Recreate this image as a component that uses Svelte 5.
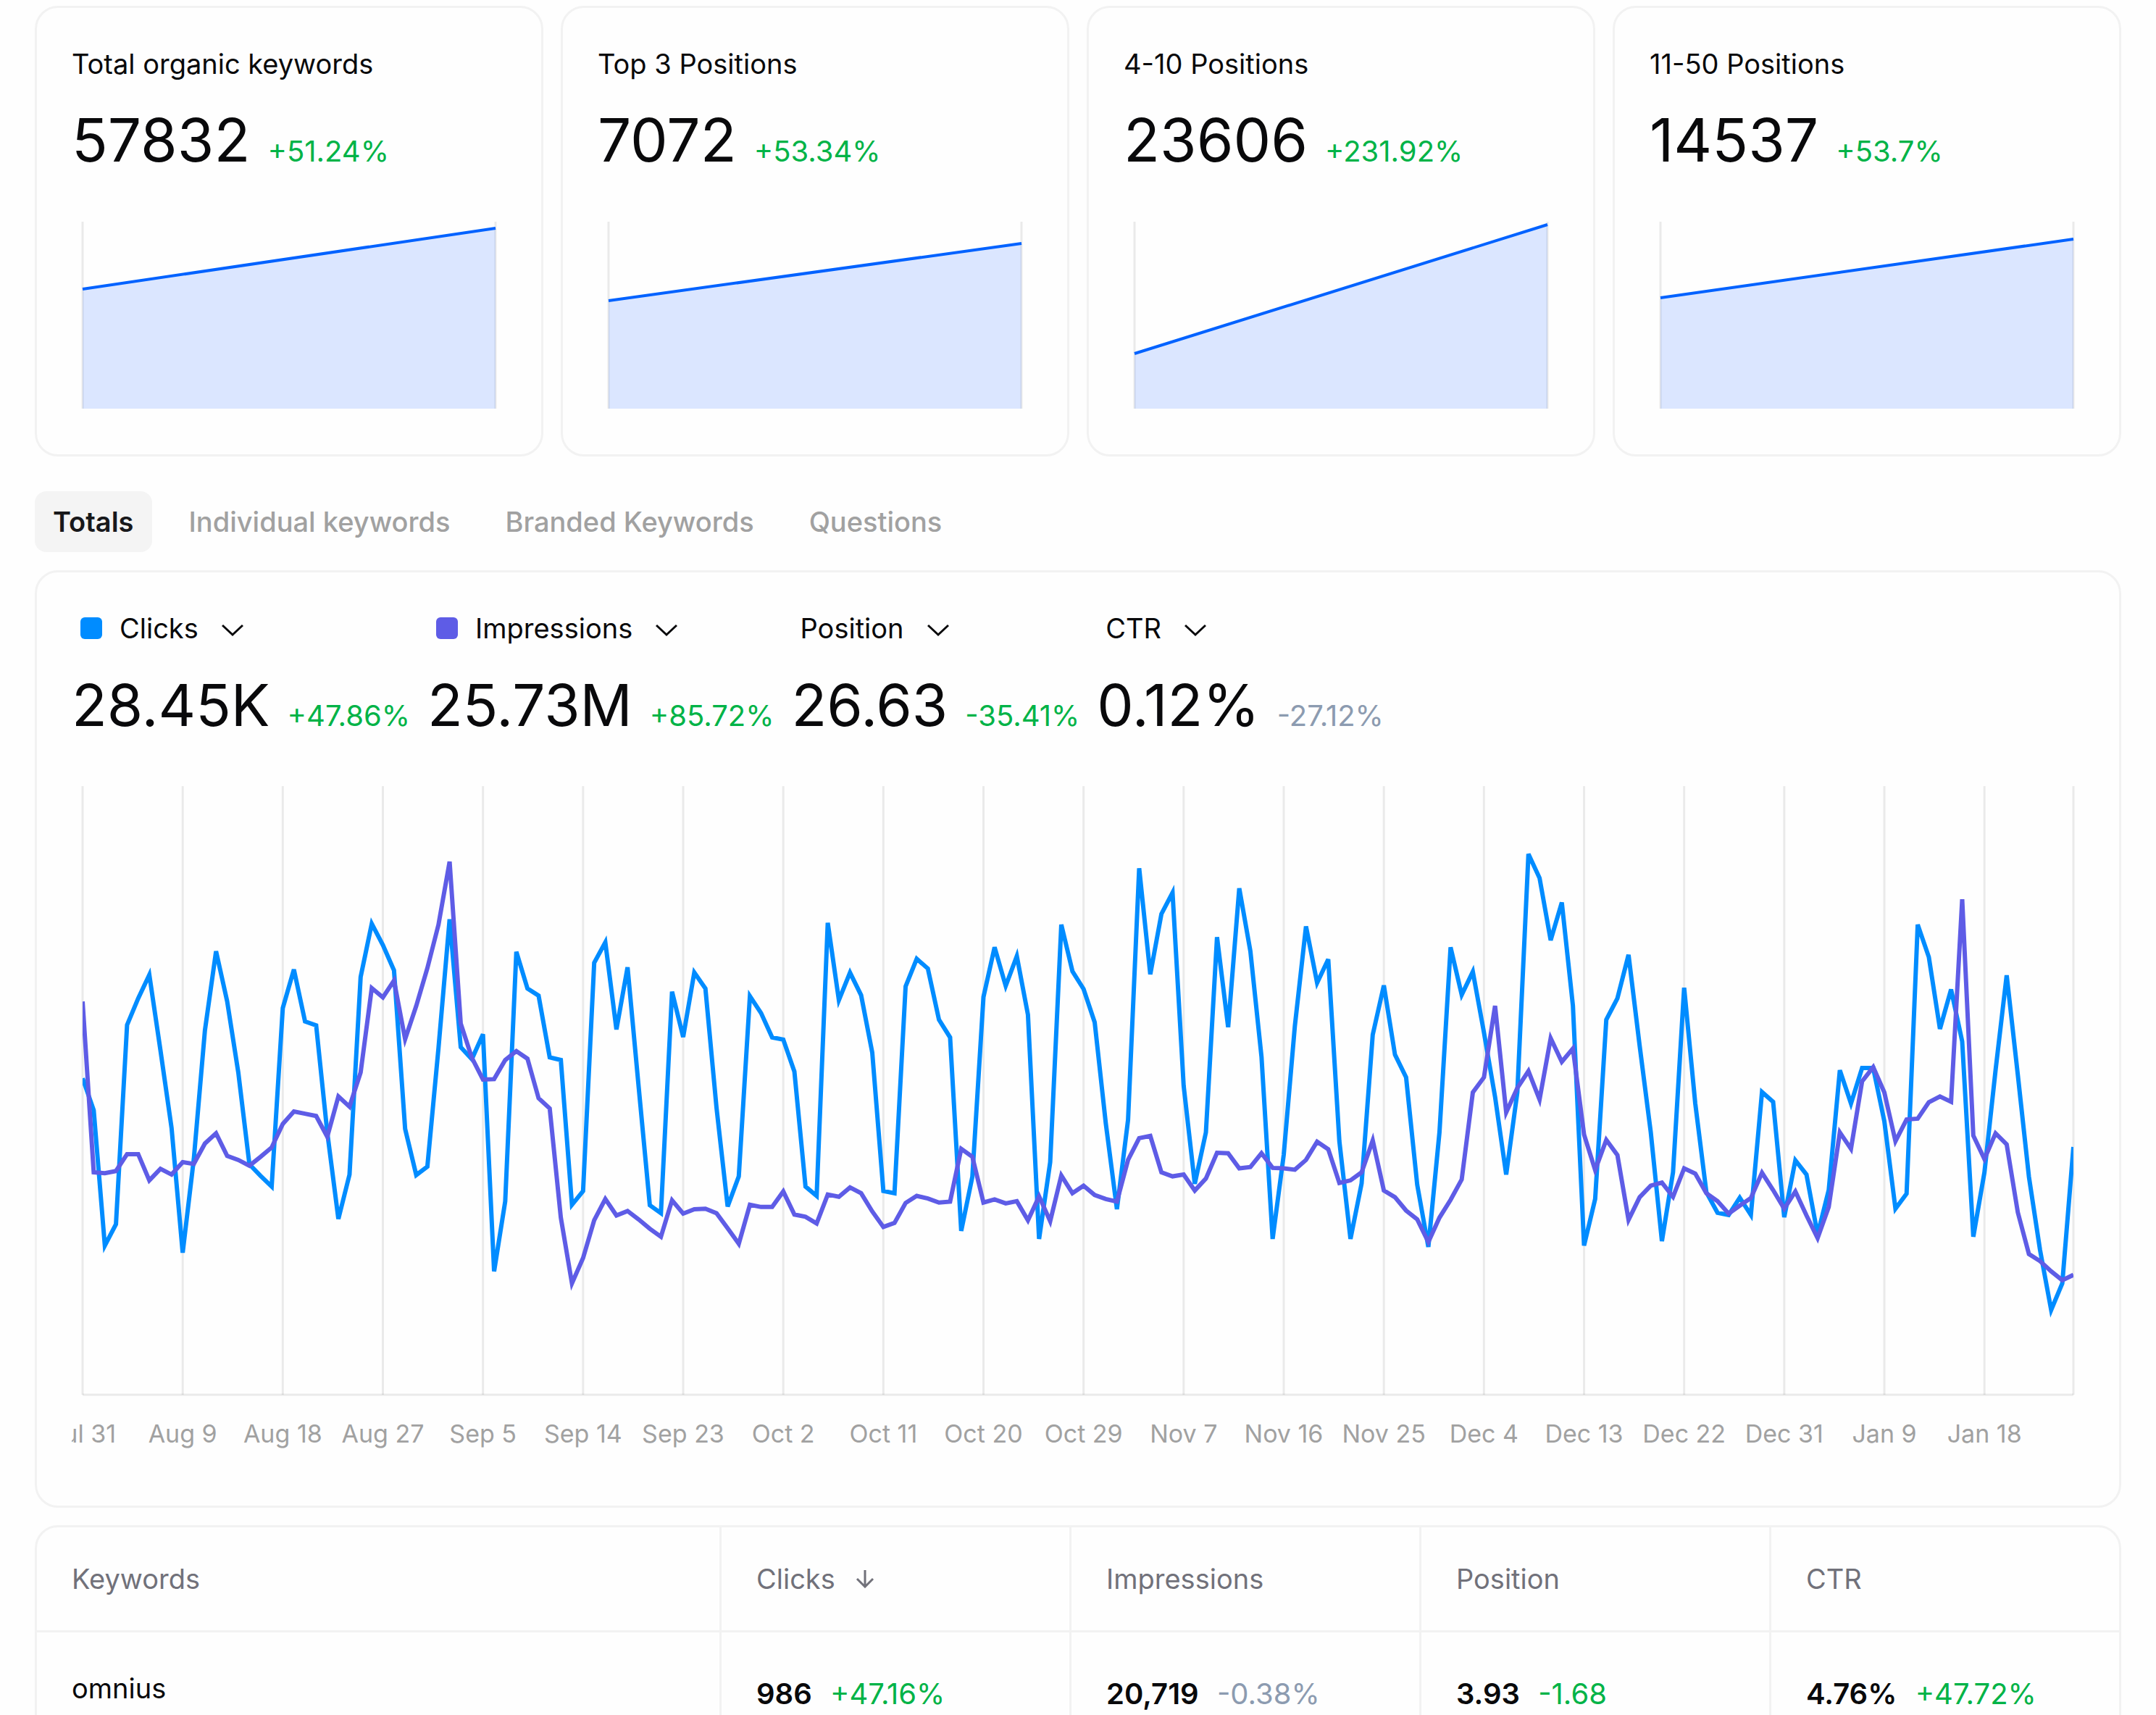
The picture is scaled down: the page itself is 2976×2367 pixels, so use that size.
<script lang="ts">
	type Tone = 'up' | 'muted';
	type Metric = { name: string; value: string; change: string; tone: Tone; swatch?: string };

	const cards = [
		{ title: 'Total organic keywords', value: '57832', change: '+51.24%', from: 93, to: 9 },
		{ title: 'Top 3 Positions', value: '7072', change: '+53.34%', from: 109, to: 30 },
		{ title: '4-10 Positions', value: '23606', change: '+231.92%', from: 182, to: 4 },
		{ title: '11-50 Positions', value: '14537', change: '+53.7%', from: 105, to: 24 }
	];

	const tabs = ['Totals', 'Individual keywords', 'Branded Keywords', 'Questions'];
	let activeTab = $state('Totals');

	const metrics: Metric[] = [
		{ name: 'Clicks', value: '28.45K', change: '+47.86%', tone: 'up', swatch: 'clicks' },
		{ name: 'Impressions', value: '25.73M', change: '+85.72%', tone: 'up', swatch: 'impressions' },
		{ name: 'Position', value: '26.63', change: '-35.41%', tone: 'up' },
		{ name: 'CTR', value: '0.12%', change: '-27.12%', tone: 'muted' }
	];

	const ticks = [
		'Jul 31', 'Aug 9', 'Aug 18', 'Aug 27', 'Sep 5', 'Sep 14', 'Sep 23', 'Oct 2', 'Oct 11', 'Oct 20',
		'Oct 29', 'Nov 7', 'Nov 16', 'Nov 25', 'Dec 4', 'Dec 13', 'Dec 22', 'Dec 31', 'Jan 9', 'Jan 18'
	];

	// one entry per day, measured down from the top of the plot
	const clicks = [
		668, 740, 1045, 997, 548, 488, 435, 605, 780, 1061, 850, 560, 382, 495, 655, 862, 888, 912,
		510, 423, 540, 549, 790, 985, 885, 440, 320, 368, 425, 782, 886, 867, 600, 310, 598, 625,
		569, 1103, 945, 383, 466, 482, 621, 627, 953, 922, 408, 362, 558, 418, 688, 954, 972, 473,
		575, 430, 466, 735, 957, 889, 483, 521, 576, 581, 653, 912, 933, 318, 492, 430, 481, 610,
		922, 927, 461, 399, 421, 536, 576, 1012, 890, 485, 373, 460, 393, 525, 1030, 857, 322, 427,
		467, 542, 770, 963, 762, 195, 434, 298, 250, 685, 906, 790, 350, 553, 240, 382, 620, 1030,
		840, 550, 326, 453, 400, 810, 1030, 905, 570, 459, 615, 666, 908, 1048, 790, 373, 480, 428,
		565, 710, 885, 700, 163, 217, 357, 272, 505, 1045, 940, 536, 488, 390, 595, 790, 1035, 880,
		464, 725, 925, 971, 976, 937, 976, 699, 721, 981, 853, 885, 1020, 920, 650, 725, 645, 645,
		765, 962, 928, 322, 395, 557, 468, 585, 1025, 880, 650, 436, 660, 890, 1055, 1190, 1130, 823
	];
	const impressions = [
		495, 880, 882, 877, 839, 839, 898, 872, 885, 857, 861, 815, 792, 843, 852, 865, 845, 824,
		771, 743, 748, 753, 800, 709, 732, 655, 465, 486, 448, 580, 505, 420, 322, 180, 545, 622,
		671, 670, 627, 607, 624, 713, 736, 982, 1130, 1073, 988, 940, 977, 967, 986, 1007, 1025, 943,
		973, 963, 962, 972, 1006, 1041, 953, 958, 958, 923, 975, 980, 995, 930, 935, 914, 927, 968,
		1003, 994, 949, 933, 939, 948, 946, 827, 845, 948, 941, 950, 945, 988, 934, 990, 887, 927,
		910, 931, 940, 946, 852, 803, 798, 880, 889, 885, 921, 894, 836, 837, 871, 868, 837, 870,
		871, 874, 852, 811, 828, 904, 898, 880, 808, 921, 936, 966, 986, 1037, 982, 942, 896, 700,
		666, 505, 745, 690, 652, 716, 578, 631, 601, 795, 875, 807, 841, 987, 936, 910, 903, 935,
		871, 883, 927, 945, 973, 955, 938, 881, 920, 962, 923, 977, 1028, 958, 790, 827, 675, 643,
		700, 810, 761, 759, 722, 709, 721, 265, 797, 850, 792, 817, 970, 1064, 1080, 1103, 1123, 1111
	];

	const lastDay = clicks.length - 1;
	const toPoints = (series: number[]) => series.map((y, day) => `${day},${y}`).join(' ');
	const tickX = (i: number) => `${((i * 9) / lastDay) * 100}%`;

	const columns = ['Keywords', 'Clicks', 'Impressions', 'Position', 'CTR'];
	const rows: { keyword: string; cells: { value: string; change: string; tone: Tone }[] }[] = [
		{
			keyword: 'omnius',
			cells: [
				{ value: '986', change: '+47.16%', tone: 'up' },
				{ value: '20,719', change: '-0.38%', tone: 'muted' },
				{ value: '3.93', change: '-1.68', tone: 'up' },
				{ value: '4.76%', change: '+47.72%', tone: 'up' }
			]
		}
	];
</script>

<main>
	<section class="cards">
		{#each cards as card}
			<article class="card">
				<h2>{card.title}</h2>
				<p class="figure">
					<span class="value">{card.value}</span>
					<span class="change up">{card.change}</span>
				</p>
				<svg class="spark" viewBox="0 0 100 258" preserveAspectRatio="none" aria-hidden="true">
					<polygon class="area" points="0,{card.from} 100,{card.to} 100,258 0,258" />
					<path class="rule" d="M0 0V258M100 0V258" />
					<line class="trend" x1="0" y1={card.from} x2="100" y2={card.to} />
				</svg>
			</article>
		{/each}
	</section>

	<nav class="tabs">
		{#each tabs as tab}
			<button class:active={tab === activeTab} onclick={() => (activeTab = tab)}>{tab}</button>
		{/each}
	</nav>

	<section class="panel">
		<div class="metrics">
			{#each metrics as metric}
				<div class="metric">
					<button class="picker">
						{#if metric.swatch}
							<span class="swatch {metric.swatch}"></span>
						{/if}
						{metric.name}
						<svg class="chevron" viewBox="0 0 30 24" aria-hidden="true">
							<path d="M1 8L15 21L29 8" />
						</svg>
					</button>
					<p class="figure">
						<span class="value">{metric.value}</span>
						<span class="change {metric.tone}">{metric.change}</span>
					</p>
				</div>
			{/each}
		</div>

		<div class="chart">
			<div class="plot">
				<svg class="grid" aria-hidden="true">
					{#each ticks as _, i}
						<line class="rule" x1={tickX(i)} x2={tickX(i)} y1="0" y2="100%" />
					{/each}
					<line class="rule" x1="100%" x2="100%" y1="0" y2="100%" />
					<line class="rule" x1="0" x2="100%" y1="100%" y2="100%" />
				</svg>
				<svg
					class="series"
					viewBox="0 10 {lastDay} 1371"
					preserveAspectRatio="none"
					role="img"
					aria-label="Clicks and impressions per day"
				>
					<polyline class="clicks" points={toPoints(clicks)} />
					<polyline class="impressions" points={toPoints(impressions)} />
				</svg>
			</div>
			<svg class="axis">
				{#each ticks as tick, i}
					<text x={tickX(i)} y="34">{tick}</text>
				{/each}
			</svg>
		</div>
	</section>

	<div class="table-wrap">
		<table>
			<thead>
				<tr>
					{#each columns as column}
						<th scope="col">
							{#if column === 'Clicks'}
								<button class="sort">
									{column}
									<svg class="arrow" viewBox="0 0 26 26" aria-hidden="true">
										<path d="M13 1V24M2 13L13 24L24 13" />
									</svg>
								</button>
							{:else}
								{column}
							{/if}
						</th>
					{/each}
				</tr>
			</thead>
			<tbody>
				{#each rows as row}
					<tr>
						<td class="keyword">{row.keyword}</td>
						{#each row.cells as cell}
							<td>
								<strong>{cell.value}</strong>
								<span class={cell.tone}>{cell.change}</span>
							</td>
						{/each}
					</tr>
				{/each}
			</tbody>
		</table>
	</div>
</main>

<style>
	:global(body) {
		margin: 0;
		background: #fefefe;
	}

	main {
		box-sizing: border-box;
		height: 100vh;
		padding: 8px 48px 0;
		overflow: hidden;
		color: #09090b;
		font-family: Inter, sans-serif;
		font-size: 38px;
		line-height: 56px;
	}

	h2,
	p {
		margin: 0;
		font-size: inherit;
		font-weight: 400;
	}

	button {
		padding: 0;
		border: 0;
		background: none;
		color: inherit;
		font: inherit;
		cursor: pointer;
	}

	.cards {
		display: grid;
		grid-template-columns: repeat(4, 1fr);
		gap: 24px;
	}

	.card,
	.panel,
	.table-wrap {
		border: 3px solid #f2f2f2;
		border-radius: 32px;
	}

	.card {
		padding: 49px 48px 63px;
	}

	.figure {
		display: flex;
		align-items: baseline;
		gap: 24px;
		white-space: nowrap;
	}

	.card .figure {
		margin-top: 30px;
	}

	.value {
		font-size: 80px;
		line-height: 96px;
	}

	.card .value {
		font-size: 82px;
	}

	.change {
		font-size: 40px;
	}

	.up {
		color: #00b347;
	}

	.muted {
		color: #8c9bb0;
	}

	.spark {
		display: block;
		box-sizing: border-box;
		width: 100%;
		height: 258px;
		margin-top: 64px;
		padding: 0 15px;
		overflow: visible;
	}

	.area {
		fill: #dbe6ff;
	}

	.rule {
		fill: none;
		stroke: rgba(0, 0, 0, 0.08);
		stroke-width: 3;
		vector-effect: non-scaling-stroke;
	}

	.trend {
		stroke: #0062ff;
		stroke-width: 4;
		vector-effect: non-scaling-stroke;
	}

	.tabs {
		display: flex;
		gap: 26px;
		margin: 48px 0 25px;
	}

	.tabs button {
		padding: 14px 25px;
		border-radius: 16px;
		color: #a1a1a1;
		font-weight: 500;
	}

	.tabs .active {
		background: #f4f4f4;
		color: #18181b;
		font-weight: 600;
	}

	.panel {
		padding: 49px 48px 65px;
	}

	.metrics {
		display: flex;
		gap: 24px;
	}

	.picker {
		display: flex;
		align-items: center;
		padding: 0 12px;
	}

	.swatch {
		width: 30px;
		height: 30px;
		margin-right: 24px;
		border-radius: 6px;
	}

	.swatch.clicks {
		background: #008cff;
	}

	.swatch.impressions {
		background: #5e5ce6;
	}

	.chevron {
		width: 30px;
		height: 24px;
		margin-left: 32px;
		fill: none;
		stroke: #09090b;
		stroke-width: 3;
	}

	.metric .figure {
		margin-top: 30px;
	}

	.chart {
		margin-top: 64px;
		padding: 0 15px;
		overflow: hidden;
	}

	.plot {
		display: grid;
		height: 840px;
	}

	.plot svg {
		grid-area: 1 / 1;
		width: 100%;
		height: 100%;
	}

	.grid {
		overflow: visible;
	}

	.series {
		fill: none;
		stroke-width: 6;
	}

	.series polyline {
		vector-effect: non-scaling-stroke;
	}

	.series .clicks {
		stroke: #008cff;
	}

	.series .impressions {
		stroke: #5e5ce6;
	}

	.axis {
		display: block;
		width: 100%;
		height: 56px;
		margin-top: 32px;
		overflow: visible;
		fill: #a1a1a1;
		font-size: 34px;
		text-anchor: middle;
	}

	.table-wrap {
		margin-top: 24px;
	}

	table {
		width: 100%;
		border-spacing: 0;
		table-layout: fixed;
	}

	th,
	td {
		padding: 43px 48px;
		text-align: left;
		font-weight: 400;
		vertical-align: top;
	}

	th {
		border-bottom: 3px solid #f2f2f2;
		color: #71717a;
	}

	th:first-child {
		width: 846px;
	}

	th + th,
	td + td {
		border-left: 3px solid #f2f2f2;
	}

	td + td {
		padding-top: 57px;
		font-size: 40px;
	}

	td.keyword {
		padding-top: 49px;
	}

	.sort {
		display: flex;
		align-items: center;
		gap: 28px;
	}

	.arrow {
		width: 26px;
		height: 26px;
		fill: none;
		stroke: #71717a;
		stroke-width: 3;
	}

	strong {
		margin-right: 14px;
		font-weight: 600;
	}
</style>
